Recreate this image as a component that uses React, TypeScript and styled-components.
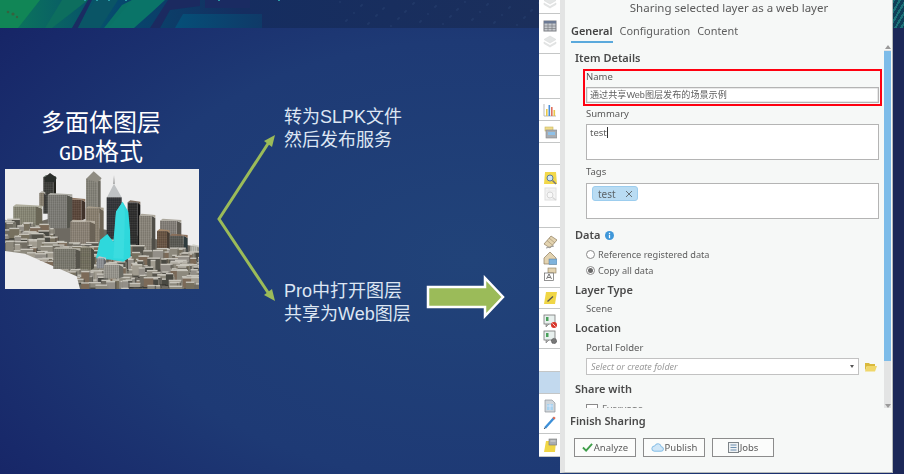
import React from 'react';
import styled, { createGlobalStyle } from 'styled-components';

const GlobalStyle = createGlobalStyle`
  html, body { margin: 0; padding: 0; background: #141f60; }
  body { width: 904px; height: 474px; overflow: hidden; font-family: "Noto Sans", "Noto Sans CJK SC", sans-serif; }
`;

const CJK = '"Liberation Sans", "Noto Sans CJK SC", sans-serif';
const UI = '"Noto Sans", "Noto Sans CJK SC", sans-serif';

const Page = styled.div`
  display: grid;
  grid-template-columns: 539px 21px 333px 11px;
  width: 904px;
  height: 474px;
  overflow: hidden;
  background: radial-gradient(ellipse 700px 440px at 52% 55%, #214379 0%, #1e3a75 50%, #18296a 78%, #141d5e 100%);
`;

const Slide = styled.section`
  display: flex;
  flex-direction: column;
`;

const SlideBody = styled.div`
  display: flex;
  align-items: flex-start;
`;

const Cover = styled.div`
  width: 194px;
  margin-left: 5px;
  padding-top: 78px;
`;

const CoverTitle = styled.h1`
  height: 63px;
  margin: 0;
  padding-right: 2px;
  font: 400 24px/29px "Noto Sans CJK SC", sans-serif;
  color: #fff;
  text-align: center;
`;

const CoverLine = styled.div`
  height: 29px;
`;

const MonoPart = styled.span`
  font-family: "DejaVu Sans Mono", monospace;
  font-size: 20px;
`;

const Connector = styled.svg`
  flex: none;
  width: 64px;
  height: 180px;
  margin: 102px 0 0 17px;
`;

const Notes = styled.div`
  width: 143px;
  margin-left: 4px;
  padding-top: 78px;
`;

const Note = styled.p<{ $gap?: number }>`
  height: 22.5px;
  margin: ${(p) => p.$gap ?? 0}px 0 0;
  font: 400 18px/22.5px ${CJK};
  color: #dde6f3;
  white-space: nowrap;
`;

const BigArrow = styled.svg`
  flex: none;
  width: 84px;
  height: 44px;
  margin: 247px 0 0 -3px;
`;

const Strip = styled.nav`
  display: flex;
  flex-direction: column;
  height: 457px;
  background: #fff;
  border-bottom: 1px solid #999;
  box-sizing: border-box;
  filter: blur(0.4px);
`;

const StripGroup = styled.div<{ $h: number; $selected?: boolean; $clipped?: boolean }>`
  display: flex;
  flex-direction: column;
  align-items: center;
  justify-content: ${(p) => (p.$clipped ? 'flex-start' : 'center')};
  gap: 2px;
  flex: none;
  height: ${(p) => p.$h}px;
  overflow: hidden;
  box-sizing: border-box;
  border-bottom: 1px solid #c4c6c6;
  background: ${(p) => (p.$selected ? '#c2d9ee' : 'transparent')};
  ${(p) => (p.$clipped ? 'svg { margin-top: -4px; }' : '')}
`;

const Panel = styled.aside`
  display: flex;
  flex-direction: column;
  height: 473px;
  box-sizing: border-box;
  background: #f6f8f7;
  border-left: 5px solid #e3e4e4;
  border-right: 1px solid #b5b9b9;
  border-bottom: 1px solid #b5b9b9;
  color: #4b4b4b;
  font-family: ${UI};
  filter: blur(0.35px);
`;

const PanelTitle = styled.div`
  height: 16px;
  font-size: 11.5px;
  line-height: 16px;
  text-align: center;
  color: #5a5a5a;
  padding-left: 1px;
`;

const Tabs = styled.div`
  display: flex;
  gap: 7px;
  height: 26px;
  padding: 6px 0 0 6px;
  box-sizing: border-box;
  flex: none;
`;

const Tab = styled.div<{ $active?: boolean }>`
  height: 19px;
  font-size: 10.9px;
  line-height: 18px;
  font-weight: ${(p) => (p.$active ? 600 : 400)};
  color: ${(p) => (p.$active ? '#444' : '#5e5e5e')};
  border-bottom: ${(p) => (p.$active ? '2px solid #5aa9dc' : '2px solid transparent')};
`;

const ScrollRow = styled.div`
  display: flex;
  height: 366px;
  flex: none;
  margin-top: 3px;
`;

const Content = styled.div`
  flex: 1;
  height: 363px;
  overflow: hidden;
  padding: 5px 0 0 10px;
  box-sizing: border-box;
`;

const Heading = styled.h2<{ $top?: number }>`
  display: flex;
  align-items: center;
  gap: 5px;
  margin: ${(p) => p.$top ?? 0}px 0 0;
  height: 16px;
  font-size: 11px;
  line-height: 16px;
  font-weight: 600;
  color: #4a4a4a;
`;

const Indented = styled.div`
  margin-left: 11px;
  width: 293px;
`;

const RedBox = styled.div`
  margin: 3px 0 0 8px;
  width: 299px;
  height: 37px;
  padding: 0 1px;
  box-sizing: border-box;
  border: 2px solid #ff0010;
`;

const Label = styled.div<{ $top?: number }>`
  margin-top: ${(p) => p.$top ?? 0}px;
  height: 12px;
  font-size: 9.5px;
  line-height: 12px;
  color: #585858;
`;

const TextField = styled.div`
  height: 16px;
  margin-top: 4px;
  padding-left: 3px;
  box-sizing: border-box;
  border: 1px solid #b4b4b4;
  background: #fff;
  font: 400 9.1px/14px ${CJK};
  color: #5f5f5f;
  white-space: nowrap;
  box-shadow: inset 0 0 0 0.5px #d4d4d4;
`;

const TextArea = styled.div<{ $top: number; $chips?: boolean }>`
  height: 36px;
  margin-top: ${(p) => p.$top}px;
  padding: 2px ${(p) => (p.$chips ? 5 : 3)}px;
  box-sizing: border-box;
  border: 1px solid #b4b4b4;
  background: #fff;
  font-size: 9.5px;
  line-height: 12px;
  color: #5f5f5f;
`;

const Caret = styled.span`
  display: inline-block;
  width: 1px;
  height: 11px;
  background: #333;
  vertical-align: -2px;
`;

const Chip = styled.span`
  display: inline-flex;
  align-items: center;
  justify-content: space-between;
  width: 46px;
  height: 15px;
  padding: 0 4px 0 5px;
  box-sizing: border-box;
  background: #b9dcf3;
  border: 1px solid #9ccdee;
  border-radius: 3px;
  font-size: 10px;
  color: #5c6468;
`;

const OptionRow = styled.label<{ $top?: number }>`
  display: flex;
  align-items: center;
  gap: 3px;
  height: 16px;
  margin: ${(p) => p.$top ?? 0}px 0 0 11px;
  font-size: 9.2px;
  color: #5e5e5e;
`;

const Radio = styled.span<{ $on?: boolean }>`
  display: flex;
  align-items: center;
  justify-content: center;
  width: 9px;
  height: 9px;
  box-sizing: border-box;
  border: 1px solid #8a8a8a;
  border-radius: 50%;
  background: #fff;
  &::after {
    content: '';
    width: 5px;
    height: 5px;
    border-radius: 50%;
    background: ${(p) => (p.$on ? '#6a6a6a' : 'transparent')};
  }
`;

const PlainValue = styled.div`
  margin: 5px 0 0 11px;
  height: 12px;
  font-size: 9.5px;
  line-height: 12px;
  color: #5e5e5e;
`;

const ComboRow = styled.div`
  display: flex;
  align-items: center;
  gap: 5px;
  margin: 4px 0 0 11px;
`;

const Combo = styled.div`
  display: flex;
  align-items: center;
  justify-content: space-between;
  width: 273px;
  height: 17px;
  padding: 0 4px 0 4px;
  box-sizing: border-box;
  border: 1px solid #c2c2c2;
  background: #fff;
  font-size: 9px;
  font-style: italic;
  color: #9a9a9a;
`;

const ComboCaret = styled.span`
  width: 0;
  height: 0;
  border-left: 2px solid transparent;
  border-right: 2px solid transparent;
  border-top: 3px solid #555;
`;

const CheckRow = styled.div`
  display: flex;
  align-items: flex-start;
  gap: 4px;
  height: 5px;
  margin: 7px 0 0 11px;
  font-size: 9.5px;
  line-height: 9px;
  color: #777;
`;

const CheckBox = styled.span`
  flex: none;
  width: 10px;
  height: 10px;
  border: 1px solid #8a8a8a;
  background: #fff;
`;

const Scrollbar = styled.div`
  display: flex;
  flex-direction: column;
  align-items: center;
  width: 7px;
  margin: 0 1px 0 0;
  background: linear-gradient(#f6f8f7 5px, #e3e4e4 5px);
  height: 363px;
`;

const ScrollArrow = styled.span<{ $down?: boolean }>`
  flex: none;
  width: 0;
  height: 0;
  margin: ${(p) => (p.$down ? '3px 0 0' : '0 0 2px')};
  border-left: 3px solid transparent;
  border-right: 3px solid transparent;
  ${(p) => (p.$down ? 'border-top: 4px solid #9a9a9a;' : 'border-bottom: 4px solid #9a9a9a;')}
`;

const ScrollThumb = styled.div`
  flex: none;
  width: 100%;
  height: 310px;
  margin-bottom: auto;
  background: #7dbce9;
`;

const FinishHeading = styled(Heading)`
  margin: 2px 0 0 5px;
`;

const Actions = styled.div`
  display: flex;
  gap: 7px;
  margin: 9px 0 0 9px;
`;

const ActionButton = styled.button`
  display: flex;
  align-items: center;
  justify-content: center;
  gap: 1px;
  width: 62px;
  height: 19px;
  padding: 0;
  box-sizing: border-box;
  border: 1px solid #8c8c8c;
  background: #fbfcfb;
  font-family: ${UI};
  font-size: 9.5px;
  color: #5a5a5a;
`;

const EdgeColumn = styled.div`
  display: flex;
  flex-direction: column;
`;

const BLOCK_COLORS = ['#6f6c62', '#8d897d', '#55534c', '#a19c90', '#77705f', '#4a4843', '#938f88', '#7b6a58'];

// little city blocks on the ground, seeded so every render is the same
const makeBlocks = () => {
  const out: { x: number; y: number; w: number; h: number; c: string; s: string }[] = [];
  let seed = 11;
  const rnd = () => {
    seed = (seed * 16807) % 2147483647;
    return seed / 2147483647;
  };
  for (let i = 0; i < 340; i++) {
    const x = rnd() * 600 - 14;
    const top = x < 130 ? 178 + x * 0.1 : 215 + x * 0.1;
    const bottom = x < 215 ? 258 + x * 0.42 : 372;
    const y = top + rnd() * (bottom - top);
    const w = 14 + rnd() * 28;
    const h = 10 + rnd() * 26;
    out.push({
      x,
      y,
      w,
      h,
      c: BLOCK_COLORS[Math.floor(rnd() * BLOCK_COLORS.length)],
      s: BLOCK_COLORS[Math.floor(rnd() * 3)],
    });
  }
  return out.sort((a, b) => a.y - b.y);
};

const Tower: React.FC<{ x: number; y: number; w: number; h: number; c: string; side?: string; top?: string }> = ({
  x, y, w, h, c, side = '#3d3b37', top = '#b6b3aa',
}) => {
  const sw = Math.round(w * 0.28);
  return (
    <g>
      <polygon points={`${x + w},${y} ${x + w + sw},${y + 7} ${x + w + sw},${y + h - 4} ${x + w},${y + h}`} fill={side} />
      <rect x={x} y={y} width={w} height={h} fill={c} />
      <rect x={x} y={y} width={w} height={h} fill="url(#windows)" />
      <polygon points={`${x},${y} ${x + 8},${y - 6} ${x + w + sw},${y - 2} ${x + w + sw},${y + 7} ${x + w},${y}`} fill={top} />
    </g>
  );
};

const CityImage = styled.svg`
  display: block;
  width: 194px;
  height: 120px;
  background: #eeeeee;
`;

const CityPicture: React.FC = () => (
  <CityImage viewBox="0 0 582 360" preserveAspectRatio="none">
    <defs>
      <pattern id="windows" width="6" height="7" patternUnits="userSpaceOnUse">
        <rect width="6" height="7" fill="none" />
        <rect x="0" y="0" width="2" height="7" fill="#000" opacity="0.16" />
        <rect x="0" y="5" width="6" height="1.5" fill="#fff" opacity="0.1" />
      </pattern>
      <filter id="soft"><feGaussianBlur stdDeviation="1.5" /></filter>
    </defs>
    <g filter="url(#soft)">
      <polygon points="0,185 130,150 582,235 582,360 215,360 215,345 0,255" fill="#6e6b62" />
      <Tower x={115} y={24} w={30} h={110} c="#3f403c" side="#23231f" top="#6d7a70" />
      <polygon points="118,26 135,12 155,26 150,40 120,40" fill="#2c2d2a" />
      <Tower x={243} y={30} w={34} h={105} c="#86847a" side="#6b675e" top="#a09c90" />
      <polygon points="243,30 266,7 290,28 277,40" fill="#8f8c82" />
      <Tower x={103} y={72} w={14} h={40} c="#8a8272" />
      <Tower x={192} y={92} w={38} h={62} c="#5d493c" side="#3f322a" top="#8d7560" />
      <Tower x={128} y={78} w={58} h={100} c="#7f7e78" side="#55544e" top="#aaa9a2" />
      <Tower x={25} y={112} w={68} h={70} c="#8a8977" side="#6a6656" top="#b0ae9d" />
      <Tower x={242} y={118} w={42} h={100} c="#8c8272" side="#6c6355" top="#a79d8b" />
      <Tower x={196} y={158} w={58} h={80} c="#8d8477" side="#6b6256" top="#b4ac9e" />
      <polygon points="327,18 329,45 325,45" fill="#8c8c8c" />
      <polygon points="306,85 327,44 350,85" fill="#bfc2c4" />
      <rect x="305" y="85" width="45" height="140" fill="#35363a" />
      <rect x="305" y="85" width="45" height="140" fill="url(#windows)" />
      <Tower x={368} y={100} w={30} h={145} c="#2f2f2e" side="#181818" top="#7a6a5c" />
      <Tower x={402} y={140} w={38} h={130} c="#8b867b" side="#4f4d47" top="#aca79b" />
      <Tower x={465} y={155} w={50} h={80} c="#86817a" side="#5c5851" top="#aaa69c" />
      <Tower x={456} y={186} w={30} h={95} c="#6b5645" side="#443a30" top="#a08468" />
      <Tower x={494} y={200} w={42} h={116} c="#5b5b55" side="#2f3a3c" top="#8a6f5a" />
      <Tower x={556} y={232} w={22} h={90} c="#b9b9b0" side="#8e8e86" top="#d0d0c8" />
      {makeBlocks().map((b, i) => (
        <g key={i}>
          <rect x={b.x} y={b.y - b.h} width={b.w} height={b.h} fill={b.c} />
          <rect x={b.x} y={b.y - b.h - 3} width={b.w} height={4} fill="#c9c6bd" />
          <rect x={b.x + b.w} y={b.y - b.h} width={4} height={b.h} fill={b.s} opacity="0.8" />
          <rect x={b.x - 2} y={b.y} width={b.w + 6} height={3} fill="#2f2d29" opacity="0.7" />
        </g>
      ))}
      <polygon points="0,246 60,254 130,285 215,322 225,360 0,360" fill="#eeeeee" />
      <polygon points="273,268 285,213 307,195 325,218 333,128 353,98 370,128 375,183 377,263 355,278 325,273" fill="#2ed8dc" />
      <polygon points="333,128 353,98 360,128 356,270 325,268" fill="#3adcdf" />
      <Tower x={275} y={268} w={22} h={30} c="#8f9296" side="#63666a" top="#bfc2c6" />
      <Tower x={296} y={288} w={46} h={40} c="#9a9890" side="#6b6a64" top="#c4c2ba" />
      <Tower x={145} y={240} w={66} h={60} c="#7c7a70" side="#55534c" top="#aeaba0" />
      <Tower x={226} y={236} w={32} h={66} c="#73705f" side="#4b493f" top="#a7a393" />
    </g>
  </CityImage>
);

const BannerArt = styled.svg`
  display: block;
  width: 100%;
  height: 28px;
  flex: none;
`;

const Banner: React.FC = () => (
  <BannerArt viewBox="0 0 539 28" preserveAspectRatio="none">
    <defs>
      <linearGradient id="bannerBase" x1="0" x2="1" y1="0" y2="0">
        <stop offset="0" stopColor="#0c7a5a" />
        <stop offset="0.22" stopColor="#06486e" />
        <stop offset="0.45" stopColor="#152d60" />
        <stop offset="1" stopColor="#1b2f5c" />
      </linearGradient>
      <linearGradient id="bannerPatch" x1="0" x2="1" y1="0" y2="0">
        <stop offset="0" stopColor="#054f78" />
        <stop offset="1" stopColor="#0f3a68" />
      </linearGradient>
    </defs>
    <rect width="539" height="28" fill="url(#bannerBase)" />
    <polygon points="0,0 40,0 18,28 0,28" fill="#118656" />
    <polygon points="45,28 62,0 88,0 52,28" fill="#0d6e5e" />
    <polygon points="72,28 88,0 92,0 78,28" fill="#1a2c62" />
    <polygon points="95,0 118,0 100,28 78,28" fill="#0a5566" />
    <polygon points="104,28 122,5 132,0 146,0 132,28" fill="#0a7266" />
    <polygon points="132,0 165,0 152,12 134,28 108,28" fill="#0a7468" />
    <polygon points="150,28 168,0 200,0 200,6 170,10 160,28" fill="#1b2a60" />
    <polygon points="175,28 183,14 262,14 262,28" fill="url(#bannerPatch)" />
    <polygon points="205,0 250,0 250,8 205,8" fill="#1a2b62" />
    <g fill="#2a9aa6">
      <rect x="84" y="0" width="2" height="1" />
      <rect x="96" y="0" width="2" height="1" />
      <rect x="108" y="0" width="2" height="1" />
      <rect x="125" y="0" width="2" height="1" />
      <rect x="218" y="0" width="2" height="1" />
      <rect x="278" y="0" width="2" height="1" />
    </g>
    <g fill="#3f5a3a" opacity="0.8">
      <circle cx="8" cy="12" r="1.3" />
      <circle cx="13" cy="14" r="1.6" />
      <circle cx="17" cy="17" r="1.2" />
    </g>
    <g fill="#2a4473" opacity="0.55">
      {Array.from({ length: 46 }).map((_, i) => (
        <circle key={i} cx={340 + ((i * 37) % 200)} cy={2 + ((i * 13) % 25)} r={0.9} />
      ))}
    </g>
  </BannerArt>
);

const EdgeBanner = styled.div`
  height: 28px;
  background: repeating-linear-gradient(120deg, #1c7379 0 2px, #0e3f58 2px 5px);
`;

const EdgeFill = styled.div`
  flex: 1;
  background: #1c2858;
`;

const IconSvg = styled.svg<{ $size?: number }>`
  display: block;
  flex: none;
  width: ${(p) => p.$size ?? 14}px;
  height: ${(p) => p.$size ?? 14}px;
`;

type IconName =
  | 'layers' | 'table' | 'chart' | 'save' | 'findYellow' | 'findGrey' | 'diamond' | 'houseMap'
  | 'textA' | 'pencilNote' | 'slideBlock' | 'slideGear' | 'doc' | 'pen' | 'noteFlag';

const icons: Record<IconName, React.ReactNode> = {
  layers: (
    <g fill="#e4e6e6" stroke="#dadcdc" strokeWidth="0.6">
      <polygon points="7,1 13,4.5 7,8 1,4.5" />
      <polygon points="1,7 7,10.5 13,7 13,8.5 7,12 1,8.5" />
    </g>
  ),
  table: (
    <g>
      <rect x="1" y="2" width="12" height="10" fill="#c6cace" stroke="#7c7f84" />
      <rect x="1" y="2" width="12" height="2.5" fill="#6c7a94" />
      <path d="M5 4v8M9 4v8M1 7h12M1 9.5h12" stroke="#7c7f84" strokeWidth="0.7" />
    </g>
  ),
  chart: (
    <g>
      <path d="M1 1v12h12" fill="none" stroke="#bbb" />
      <rect x="3" y="6" width="1.6" height="7" fill="#e7c84a" />
      <rect x="5.5" y="2" width="1.6" height="11" fill="#4a90d9" />
      <rect x="8" y="4" width="1.6" height="9" fill="#e0705a" />
      <rect x="10.5" y="7" width="1.6" height="6" fill="#e7c84a" />
    </g>
  ),
  save: (
    <g>
      <rect x="2" y="2" width="8" height="4" fill="#f0dc8a" stroke="#c7b560" strokeWidth="0.6" />
      <rect x="3" y="5" width="11" height="8" fill="#a9adb2" stroke="#888" strokeWidth="0.6" />
      <rect x="5" y="7" width="7" height="3" fill="#8fc1e8" />
    </g>
  ),
  findYellow: (
    <g>
      <polygon points="2,1 13,1 14,13 1,13" fill="#f2d84a" />
      <circle cx="7" cy="7" r="3" fill="#cfe4f5" stroke="#5f7e9c" />
      <path d="M9.5 9.5L13 13" stroke="#777" strokeWidth="1.4" />
    </g>
  ),
  findGrey: (
    <g opacity="0.6">
      <rect x="2" y="1" width="11" height="12" fill="#eee" stroke="#ccc" />
      <path d="M2 4h11M6 1v12" stroke="#ddd" />
      <circle cx="7" cy="8" r="3" fill="#f5f5f5" stroke="#bbb" />
      <path d="M9.5 10.5L13 13" stroke="#bbb" strokeWidth="1.2" />
    </g>
  ),
  diamond: (
    <g>
      <polygon points="1,9 8,1 14,5 7,13" fill="#e3d3b0" stroke="#8e7d5f" strokeWidth="0.7" />
      <path d="M4 5.5l6 5M6 3l6 5" stroke="#8e7d5f" strokeWidth="0.5" />
      <path d="M3 13l8-2" stroke="#999" strokeWidth="1" />
    </g>
  ),
  houseMap: (
    <g>
      <polygon points="1,7 7,1 13,7 13,13 1,13" fill="#e3d3b0" stroke="#8e7d5f" strokeWidth="0.7" />
      <rect x="6" y="8" width="8" height="5.5" fill="#7fb3dc" stroke="#5b7e9a" strokeWidth="0.5" />
    </g>
  ),
  textA: (
    <g>
      <rect x="5" y="1" width="8" height="5" fill="#e3d3b0" stroke="#8e7d5f" strokeWidth="0.6" />
      <rect x="1.5" y="6" width="9" height="7.5" fill="#fff" stroke="#666" strokeWidth="0.7" />
      <path d="M3.5 12l2.5-5 2.5 5M4.5 10.5h3" fill="none" stroke="#555" strokeWidth="0.8" />
    </g>
  ),
  pencilNote: (
    <g>
      <polygon points="3,1 14,1 12,13 1,13" fill="#f0d646" />
      <path d="M4.5 10.5L10 5.5" stroke="#555" strokeWidth="1.3" />
    </g>
  ),
  slideBlock: (
    <g>
      <rect x="1" y="1" width="11" height="9" fill="#e8f0ee" stroke="#777" strokeWidth="0.8" />
      <rect x="3" y="3" width="2.5" height="4" fill="#4aa05a" />
      <path d="M3 10v3l3-3" fill="#aaa" stroke="#777" strokeWidth="0.6" />
      <circle cx="11" cy="11" r="3" fill="#d8352a" />
      <path d="M9.5 9.5l3 3" stroke="#fff" strokeWidth="0.8" />
    </g>
  ),
  slideGear: (
    <g>
      <rect x="1" y="1" width="11" height="9" fill="#e8f0ee" stroke="#777" strokeWidth="0.8" />
      <rect x="3" y="3" width="2.5" height="4" fill="#4aa05a" />
      <path d="M3 10v3l3-3" fill="#aaa" stroke="#777" strokeWidth="0.6" />
      <circle cx="11" cy="11" r="2.6" fill="#777" stroke="#555" strokeWidth="1" strokeDasharray="1 0.6" />
    </g>
  ),
  doc: (
    <g>
      <polygon points="2,1 9,1 12,4 12,13 2,13" fill="#cfd6dc" stroke="#8c9299" strokeWidth="0.7" />
      <rect x="4" y="5" width="6" height="6" fill="#a7d3f0" />
      <path d="M4 7h6M7 5v6" stroke="#eef" strokeWidth="0.6" />
    </g>
  ),
  pen: (
    <g>
      <path d="M2 13L11 3" stroke="#3c8fd8" strokeWidth="2.4" />
      <path d="M10.3 3.8L11.8 2.2" stroke="#e06a50" strokeWidth="2.4" />
      <path d="M1 14l1.3-1.4" stroke="#555" strokeWidth="1" />
    </g>
  ),
  noteFlag: (
    <g>
      <polygon points="3,3 13,3 12,14 1,14" fill="#f0d646" />
      <rect x="6" y="1" width="8" height="6" fill="#a9adb0" stroke="#777" strokeWidth="0.6" />
      <path d="M7.5 3h5" stroke="#eee" strokeWidth="0.7" />
    </g>
  ),
};

const ToolIcon: React.FC<{ name: IconName }> = ({ name }) => (
  <IconSvg viewBox="0 0 14 14">{icons[name]}</IconSvg>
);

const stripGroups: { h: number; items: IconName[]; selected?: boolean; clipped?: boolean }[] = [
  { h: 14, items: ['layers'], clipped: true },
  { h: 40, items: ['table', 'layers'] },
  { h: 22, items: [] },
  { h: 23, items: [] },
  { h: 22, items: ['chart'] },
  { h: 22, items: ['save'] },
  { h: 22, items: [] },
  { h: 42, items: ['findYellow', 'findGrey'] },
  { h: 21, items: [] },
  { h: 60, items: ['diamond', 'houseMap', 'textA'] },
  { h: 21, items: ['pencilNote'] },
  { h: 40, items: ['slideBlock', 'slideGear'] },
  { h: 23, items: [] },
  { h: 22, items: [], selected: true },
  { h: 40, items: ['doc', 'pen'] },
  { h: 23, items: ['noteFlag'] },
];

export default function App() {
  return (
    <Page>
      <GlobalStyle />
      <Slide>
        <Banner />
        <SlideBody>
          <Cover>
            <CoverTitle>
              <CoverLine>多面体图层</CoverLine>
              <CoverLine>
                <MonoPart>GDB</MonoPart>格式
              </CoverLine>
            </CoverTitle>
            <CityPicture />
          </Cover>
          <Connector viewBox="0 0 64 180">
            <path d="M55 9L3 89L55 167" fill="none" stroke="#9bbb59" strokeWidth="3" />
            <polygon points="59,5 48,11 56,17" fill="#9bbb59" />
            <polygon points="59,171 48,165 56,159" fill="#9bbb59" />
          </Connector>
          <Notes>
            <Note>转为SLPK文件</Note>
            <Note>然后发布服务</Note>
            <Note $gap={129}>Pro中打开图层</Note>
            <Note>共享为Web图层</Note>
          </Notes>
          <BigArrow viewBox="0 0 84 44">
            <polygon
              points="4,12 61,12 61,3 79,22 61,41 61,32 4,32"
              fill="#9bbb59"
              stroke="#fff"
              strokeWidth="2.5"
            />
          </BigArrow>
        </SlideBody>
      </Slide>

      <Strip>
        {stripGroups.map((g, i) => (
          <StripGroup key={i} $h={g.h} $selected={g.selected} $clipped={g.clipped}>
            {g.items.map((name) => (
              <ToolIcon key={name} name={name} />
            ))}
          </StripGroup>
        ))}
      </Strip>

      <Panel>
        <PanelTitle>Sharing selected layer as a web layer</PanelTitle>
        <Tabs>
          <Tab $active>General</Tab>
          <Tab>Configuration</Tab>
          <Tab>Content</Tab>
        </Tabs>
        <ScrollRow>
          <Content>
            <Heading>Item Details</Heading>
            <RedBox>
              <Label>Name</Label>
              <TextField>通过共享Web图层发布的场景示例</TextField>
            </RedBox>
            <Indented>
              <Label $top={2}>Summary</Label>
              <TextArea $top={4}>
                test
                <Caret />
              </TextArea>
              <Label $top={6}>Tags</Label>
              <TextArea $top={5} $chips>
                <Chip>
                  test
                  <svg width="8" height="8" viewBox="0 0 8 8">
                    <path d="M1 1l6 6M7 1L1 7" stroke="#5c6468" strokeWidth="0.9" />
                  </svg>
                </Chip>
              </TextArea>
            </Indented>
            <Heading $top={8}>
              Data
              <IconSvg $size={9} viewBox="0 0 10 10">
                <circle cx="5" cy="5" r="5" fill="#3f97d9" />
                <rect x="4.3" y="4.2" width="1.4" height="3.8" fill="#fff" />
                <rect x="4.3" y="2" width="1.4" height="1.4" fill="#fff" />
              </IconSvg>
            </Heading>
            <OptionRow $top={3}>
              <Radio />
              Reference registered data
            </OptionRow>
            <OptionRow>
              <Radio $on />
              Copy all data
            </OptionRow>
            <Heading $top={4}>Layer Type</Heading>
            <PlainValue>Scene</PlainValue>
            <Heading $top={5}>Location</Heading>
            <Indented>
              <Label $top={6}>Portal Folder</Label>
            </Indented>
            <ComboRow>
              <Combo>
                Select or create folder
                <ComboCaret />
              </Combo>
              <IconSvg $size={13} viewBox="0 0 13 11">
                <path d="M1 2h4l1 1h5v2H3L1 10z" fill="#d9b93c" />
                <path d="M3 5h10l-2 5.5H1z" fill="#f0d76a" />
              </IconSvg>
            </ComboRow>
            <Heading $top={6}>Share with</Heading>
            <CheckRow>
              <CheckBox />
              Everyone
            </CheckRow>
          </Content>
          <Scrollbar>
            <ScrollArrow />
            <ScrollThumb />
            <ScrollArrow $down />
          </Scrollbar>
        </ScrollRow>
        <FinishHeading>Finish Sharing</FinishHeading>
        <Actions>
          <ActionButton>
            <IconSvg $size={11} viewBox="0 0 12 10">
              <path d="M1 5l3.5 3.5L11 1" fill="none" stroke="#3f9e4a" strokeWidth="2" />
            </IconSvg>
            Analyze
          </ActionButton>
          <ActionButton>
            <IconSvg $size={13} viewBox="0 0 14 10">
              <path d="M3.5 9h7.5a2.4 2.4 0 000-4.8A3.6 3.6 0 004 3.4 2.8 2.8 0 003.5 9z" fill="#cfe6f7" stroke="#6fb2e2" strokeWidth="0.9" />
            </IconSvg>
            Publish
          </ActionButton>
          <ActionButton>
            <IconSvg $size={11} viewBox="0 0 11 11">
              <rect x="0.5" y="0.5" width="10" height="10" fill="#eef1f3" stroke="#7d8488" />
              <path d="M2.5 3h6M2.5 5.5h6M2.5 8h6" stroke="#5c84a8" strokeWidth="0.9" />
            </IconSvg>
            Jobs
          </ActionButton>
        </Actions>
      </Panel>

      <EdgeColumn>
        <EdgeBanner />
        <EdgeFill />
      </EdgeColumn>
    </Page>
  );
}
